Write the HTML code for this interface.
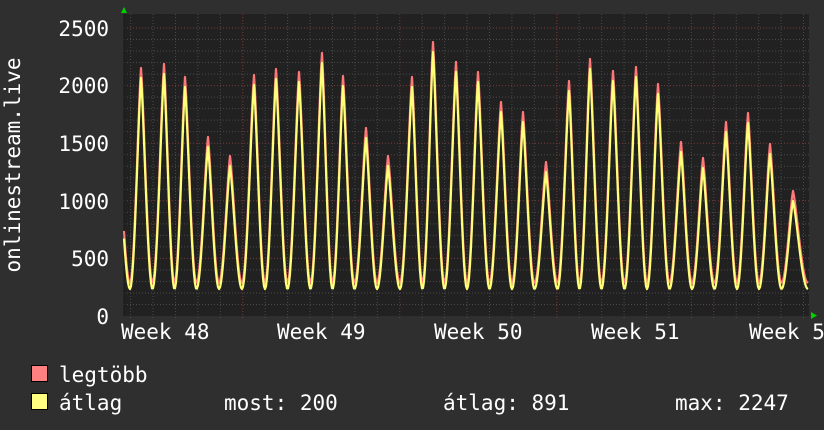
<!DOCTYPE html>
<html><head><meta charset="utf-8"><style>
html,body{margin:0;padding:0;background:#2f2f2f;}
svg{display:block}
text{font-family:"DejaVu Sans Mono","Liberation Mono",monospace;fill:#fff;font-size:21px}
</style></head><body>
<svg id="s" width="824" height="430" xmlns="http://www.w3.org/2000/svg">
<rect width="824" height="430" fill="#2f2f2f"/>
<rect x="124" y="14" width="685" height="302" fill="#212121"/>
<g id="grid"></g>
<path id="red" fill="none" stroke="#ff7878" stroke-width="2.2" stroke-linejoin="round"/>
<path id="yel" fill="none" stroke="#ffff78" stroke-width="2.2" stroke-linejoin="round"/>
<polygon points="121,13 127,13 124,7" fill="#00d000"/>
<polygon points="811,312 811,319 817,315.5" fill="#00d000"/>
<g text-anchor="end">
<text x="109" y="36">2500</text>
<text x="109" y="93">2000</text>
<text x="109" y="151">1500</text>
<text x="109" y="209">1000</text>
<text x="109" y="266">500</text>
<text x="109" y="324">0</text>
</g>
<text transform="translate(20,165) rotate(-90)" text-anchor="middle">onlinestream.live</text>
<text x="121" y="339">Week 48</text>
<text x="277" y="339">Week 49</text>
<text x="434" y="339">Week 50</text>
<text x="591" y="339">Week 51</text>
<text x="749" y="339">Week 52</text>
<rect x="31.5" y="365.5" width="16" height="16" fill="#ff8080" stroke="#000"/>
<rect x="31.5" y="393.5" width="16" height="16" fill="#ffff80" stroke="#000"/>
<text x="59" y="382">legtöbb</text>
<text x="59" y="410">átlag</text>
<text x="224" y="410">most: 200</text>
<text x="443" y="410">átlag: 891</text>
<text x="675" y="410">max: 2247</text>
</svg>
<script>
var g=document.getElementById('grid'),h='';
for(var k=1;k<=25;k++){var y=316-k*11.52;var maj=k%5==0;
h+='<line x1="124" x2="809" y1="'+y+'" y2="'+y+'" stroke="'+(maj?'#7a3a3a':'#4a4a4a')+'" stroke-dasharray="1,2"/>';}
for(var k=0;k<31;k++){var x=130.6+k*22.43;if(x>809)break;var maj=[242,400,557,714].some(function(v){return Math.abs(v-x)<4});
h+='<line y1="14" y2="319" x1="'+x+'" x2="'+x+'" stroke="'+(maj?'#7a3a3a':'#4a4a4a')+'" stroke-dasharray="1,2"/>';}
h+='<line x1="124" x2="124" y1="14" y2="316" stroke="#181818"/>';
g.innerHTML=h;
var P=[[119,160],[141,68],[164,64],[185,77],[208,137],[230,156],[254,75],[276,69],[299,72],[322,53],[343,76],[366,128],[388,156],[412,77],[433,42],[456,62],[478,72],[501,102],[523,112],[546,162],[569,81],[590,59],[613,71],[636,67],[658,84],[681,142],[703,158],[726,122],[748,113],[770,144],[793,191],[823,230]];
function build(off,tr){var d='';for(var x=124;x<=808;x+=1){var i=0;while(i<P.length-2&&P[i+1][0]<x)i++;
var a=P[i],b=P[i+1];var t=(x-a[0])/(b[0]-a[0]);
var pa=a[1]+off,pb=b[1]+off;var v;
if(t<0.5){var u=t*2;v=pa+(tr-pa)*Math.pow((1-Math.cos(Math.PI*u))/2,0.65);}
else{var u=(1-t)*2;v=pb+(tr-pb)*Math.pow((1-Math.cos(Math.PI*u))/2,0.65);}
d+=(x==124?'M':'L')+x+','+v.toFixed(1);}return d;}
document.getElementById('red').setAttribute('d',build(0,283));
document.getElementById('yel').setAttribute('d',build(10,289));
</script>
</body></html>
